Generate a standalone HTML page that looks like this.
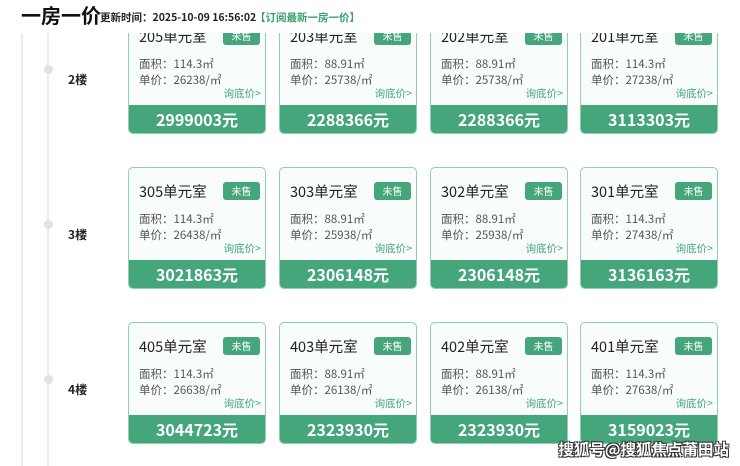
<!DOCTYPE html><html><head><meta charset="utf-8"><style>
*{margin:0;padding:0;box-sizing:border-box}
body{width:740px;height:466px;background:#fff;position:relative;overflow:hidden;font-family:"Noto Sans CJK SC","Liberation Sans",sans-serif;color:#333}
.vl{position:absolute;top:0;bottom:0;width:2px;background:#ececec}
.dot{position:absolute;width:9px;height:9px;border-radius:50%;background:#e2e2e2;left:44px}
.fl{position:absolute;left:68px;font-size:12px;font-weight:bold;color:#222;line-height:16px}
.card{position:absolute;width:138px;height:122px;border:1px solid #8fd0b2;border-radius:5px;background:#f8fcfb;overflow:hidden}
.t{position:absolute;left:10px;top:14px;font-size:14.5px;color:#222;line-height:20px}
.b{position:absolute;left:94px;top:14px;width:37px;height:18px;background:#45a67c;color:#fff;font-size:10px;text-align:center;line-height:18px;border-radius:3px}
.a{position:absolute;left:10px;font-size:11.5px;color:#555;line-height:16px}
.q{position:absolute;right:4px;top:74px;font-size:10.5px;color:#45a67c;line-height:14px}
.p{position:absolute;left:0;right:0;bottom:0;height:28px;background:#45a67c;color:#fff;font-size:16px;font-weight:bold;text-align:center;line-height:28px}
.hd{position:absolute;left:0;top:0;width:740px;height:33px;background:#fff;z-index:5}
.wm{position:absolute;right:11px;bottom:6px;font-size:15.5px;color:#fff;font-weight:bold;z-index:6;text-shadow:-1px -1px 0 #333,1px -1px 0 #333,-1px 1px 0 #333,1px 1px 0 #333}
</style></head><body>
<div class="vl" style="left:21px"></div><div class="vl" style="left:47px"></div>
<div class="dot" style="top:65px"></div><div class="fl" style="top:72px">2楼</div>
<div class="dot" style="top:220px"></div><div class="fl" style="top:227px">3楼</div>
<div class="dot" style="top:375px"></div><div class="fl" style="top:382px">4楼</div>
<div class="hd"><span style="position:absolute;left:21px;top:1px;font-size:20px;font-weight:bold;color:#111;line-height:28px">一房一价</span><span style="position:absolute;left:100px;top:10px;font-size:10.5px;font-weight:bold;color:#222;line-height:16px">更新时间：2025-10-09 16:56:02</span><span style="position:absolute;left:255px;top:10px;font-size:10.5px;font-weight:bold;color:#3aa06a;line-height:16px">【订阅最新一房一价】</span></div>

<div class="card" style="left:128px;top:12px"><div class="t">205单元室</div><div class="b">未售</div><div class="a" style="top:43px">面积：114.3㎡</div><div class="a" style="top:59px">单价：26238/㎡</div><div class="q">询底价&gt;</div><div class="p">2999003元</div></div>
<div class="card" style="left:279px;top:12px"><div class="t">203单元室</div><div class="b">未售</div><div class="a" style="top:43px">面积：88.91㎡</div><div class="a" style="top:59px">单价：25738/㎡</div><div class="q">询底价&gt;</div><div class="p">2288366元</div></div>
<div class="card" style="left:430px;top:12px"><div class="t">202单元室</div><div class="b">未售</div><div class="a" style="top:43px">面积：88.91㎡</div><div class="a" style="top:59px">单价：25738/㎡</div><div class="q">询底价&gt;</div><div class="p">2288366元</div></div>
<div class="card" style="left:580px;top:12px"><div class="t">201单元室</div><div class="b">未售</div><div class="a" style="top:43px">面积：114.3㎡</div><div class="a" style="top:59px">单价：27238/㎡</div><div class="q">询底价&gt;</div><div class="p">3113303元</div></div>

<div class="card" style="left:128px;top:167px"><div class="t">305单元室</div><div class="b">未售</div><div class="a" style="top:43px">面积：114.3㎡</div><div class="a" style="top:59px">单价：26438/㎡</div><div class="q">询底价&gt;</div><div class="p">3021863元</div></div>
<div class="card" style="left:279px;top:167px"><div class="t">303单元室</div><div class="b">未售</div><div class="a" style="top:43px">面积：88.91㎡</div><div class="a" style="top:59px">单价：25938/㎡</div><div class="q">询底价&gt;</div><div class="p">2306148元</div></div>
<div class="card" style="left:430px;top:167px"><div class="t">302单元室</div><div class="b">未售</div><div class="a" style="top:43px">面积：88.91㎡</div><div class="a" style="top:59px">单价：25938/㎡</div><div class="q">询底价&gt;</div><div class="p">2306148元</div></div>
<div class="card" style="left:580px;top:167px"><div class="t">301单元室</div><div class="b">未售</div><div class="a" style="top:43px">面积：114.3㎡</div><div class="a" style="top:59px">单价：27438/㎡</div><div class="q">询底价&gt;</div><div class="p">3136163元</div></div>

<div class="card" style="left:128px;top:322px"><div class="t">405单元室</div><div class="b">未售</div><div class="a" style="top:43px">面积：114.3㎡</div><div class="a" style="top:59px">单价：26638/㎡</div><div class="q">询底价&gt;</div><div class="p">3044723元</div></div>
<div class="card" style="left:279px;top:322px"><div class="t">403单元室</div><div class="b">未售</div><div class="a" style="top:43px">面积：88.91㎡</div><div class="a" style="top:59px">单价：26138/㎡</div><div class="q">询底价&gt;</div><div class="p">2323930元</div></div>
<div class="card" style="left:430px;top:322px"><div class="t">402单元室</div><div class="b">未售</div><div class="a" style="top:43px">面积：88.91㎡</div><div class="a" style="top:59px">单价：26138/㎡</div><div class="q">询底价&gt;</div><div class="p">2323930元</div></div>
<div class="card" style="left:580px;top:322px"><div class="t">401单元室</div><div class="b">未售</div><div class="a" style="top:43px">面积：114.3㎡</div><div class="a" style="top:59px">单价：27638/㎡</div><div class="q">询底价&gt;</div><div class="p">3159023元</div></div>

<div class="wm">搜狐号@搜狐焦点莆田站</div>
</body></html>
